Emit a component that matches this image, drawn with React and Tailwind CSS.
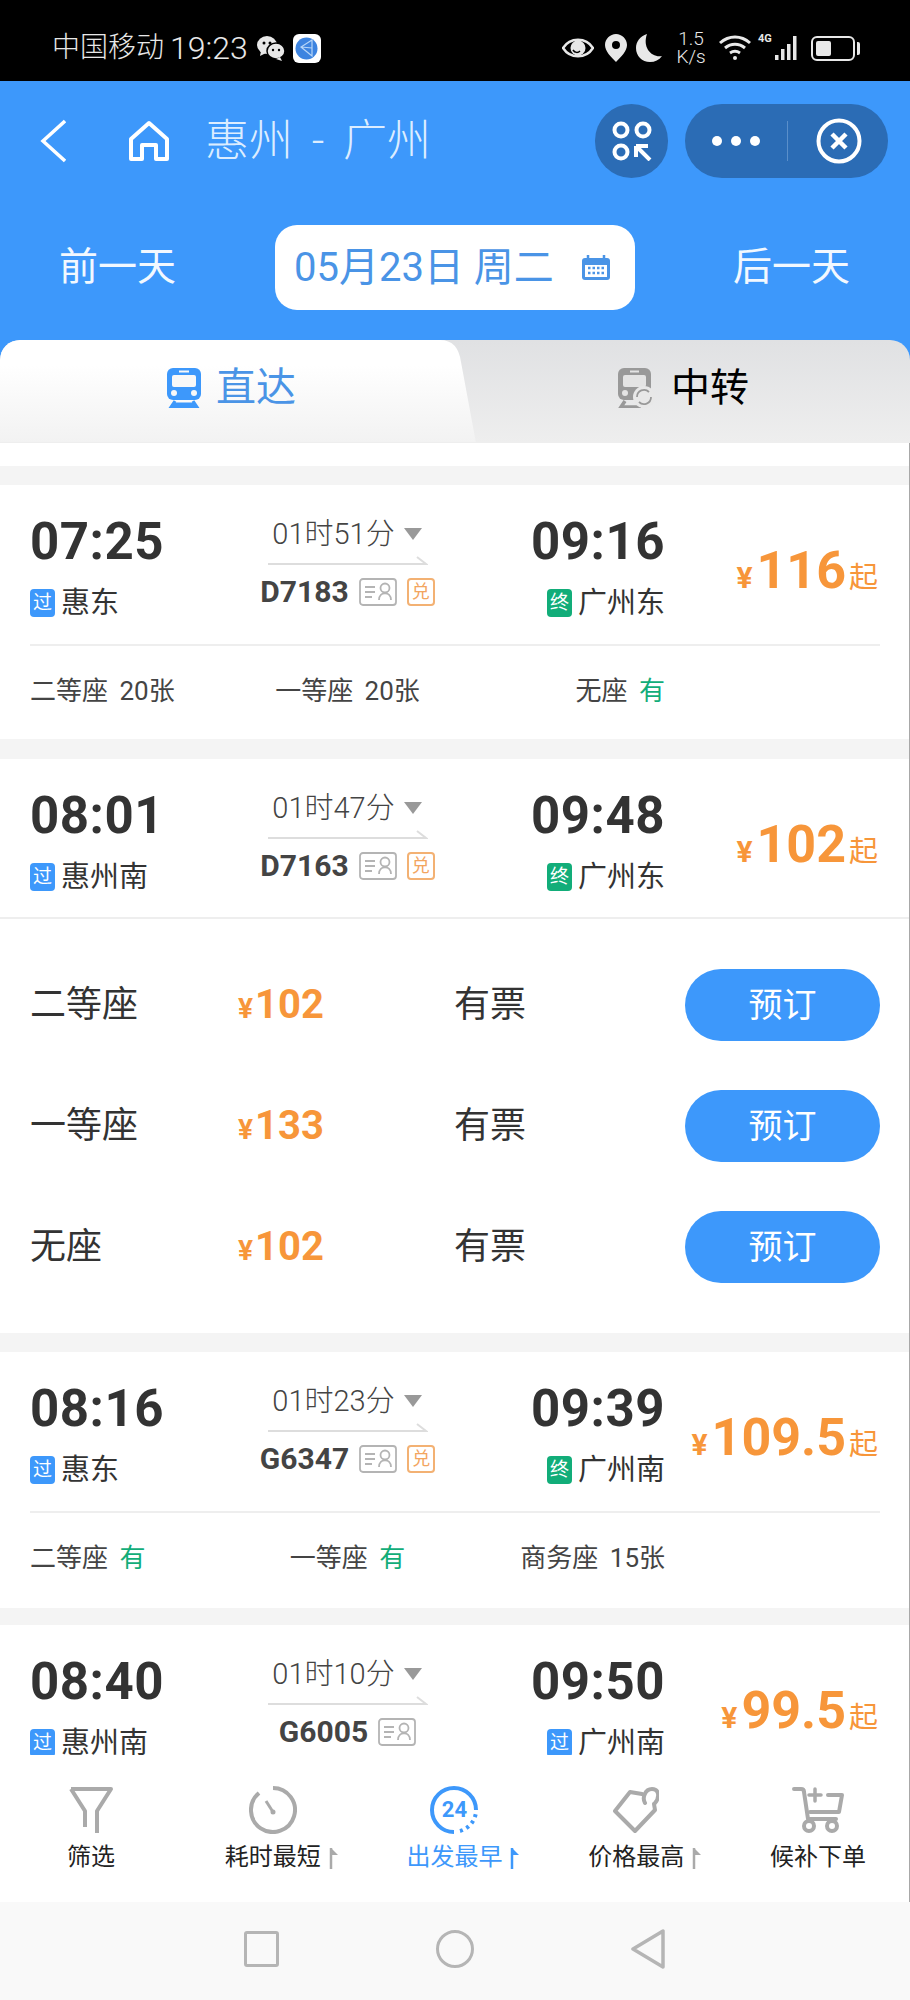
import React from "react";

function IdIcon() {
  return (
    <svg width="38" height="28" viewBox="0 0 38 28" fill="none" stroke="#b4b4b4" strokeWidth="1.8">
      <rect x="1" y="1" width="36" height="26" rx="3" />
      <path d="M6 9h10M6 14h10M6 19h7" />
      <circle cx="26" cy="10" r="4.5" />
      <path d="M20 22c0-9 12-9 12 0" />
    </svg>
  );
}

function Tag({ kind }) {
  const bg = kind === "终" ? "bg-[#12ad79]" : "bg-[#3d98fb]";
  return (
    <span className={`${bg} w-[25px] h-[28px] rounded-[4px] text-white text-[19px] leading-[28px] text-center shrink-0`}>
      {kind}
    </span>
  );
}

function Header({ from, fromTag, dep, dur, no, exch, arr, to, toTag, price }) {
  return (
    <div className="flex h-[135px] pl-[30px] pr-[31px] pt-[27px] items-start">
      <div className="w-[200px]">
        <div className="text-[51px] leading-[60px] font-bold text-[#333333] tracking-[0.5px]">{dep}</div>
        <div className="flex items-center gap-[6px] mt-[14px] h-[34px]">
          <Tag kind={fromTag} />
          <span className="text-[29px] leading-[34px] text-[#333333]">{from}</span>
        </div>
      </div>
      <div className="w-[235px] flex flex-col items-center">
        <div className="flex items-center gap-[9px] h-[40px] mt-[2px] -ml-[1px]">
          <span className="text-[29px] leading-[40px] font-light text-[#444444] whitespace-nowrap">{dur}</span>
          <span className="w-0 h-0 border-x-[9px] border-x-transparent border-t-[12px] border-t-[#999999]" />
        </div>
        <svg width="160" height="10" viewBox="0 0 160 10" fill="none" stroke="#dddddd" strokeWidth="2" className="mt-[1px]">
          <path d="M0 9h158l-9-7" />
        </svg>
        <div className="flex items-center gap-[10px] mt-[9px] h-[36px]">
          <span className="text-[30px] leading-[36px] font-bold text-[#444444]">{no}</span>
          <IdIcon />
          {exch && (
            <span className="w-[28px] h-[28px] rounded-[4px] border-2 border-[#f3b173] text-[#f3a55f] text-[18px] leading-[24px] text-center">
              兑
            </span>
          )}
        </div>
      </div>
      <div className="w-[200px] flex flex-col items-end">
        <div className="text-[51px] leading-[60px] font-bold text-[#333333] tracking-[0.5px]">{arr}</div>
        <div className="flex items-center gap-[6px] mt-[14px] h-[34px]">
          <Tag kind={toTag} />
          <span className="text-[29px] leading-[34px] text-[#333333]">{to}</span>
        </div>
      </div>
      <div className="flex-1 flex items-baseline justify-end mt-[29px] text-[#f7963a] whitespace-nowrap">
        <span className="text-[30px] font-bold mr-[4px]">¥</span>
        <span className="text-[52px] leading-[60px] font-bold">{price}</span>
        <span className="text-[29px] ml-[3px]">起</span>
      </div>
    </div>
  );
}

function Seats({ items }) {
  return (
    <div className="ml-[30px] mr-[29px] border-t-2 border-[#eeeeee] h-[92px] flex items-center">
      <div className="grid grid-cols-3 w-[635px]">
        {items.map(([name, v], i) => (
          <div
            key={name}
            className={`text-[26px] text-[#444444] whitespace-nowrap [word-spacing:5px] ${i === 0 ? "justify-self-start" : i === 1 ? "justify-self-center" : "justify-self-end"}`}
          >
            {name} {v === "有" ? <span className="text-[#12ad79]">有</span> : v}
          </div>
        ))}
      </div>
    </div>
  );
}

function Book({ name, price }) {
  return (
    <div className="flex items-center h-[72px] pl-[30px] pr-[29px]">
      <span className="w-[208px] text-[36px] text-[#333333]">{name}</span>
      <span className="w-[216px] text-[#f7963a] font-bold">
        <span className="text-[28px] mr-[2px]">¥</span>
        <span className="text-[40px]">{price}</span>
      </span>
      <span className="w-[231px] text-[36px] text-[#333333]">有票</span>
      <button className="w-[195px] h-[72px] rounded-[36px] bg-[#3d98fb] text-white text-[34px]">预订</button>
    </div>
  );
}

function BarItem({ icon, label, arrow, active }) {
  const tone = active ? "text-[#3d98fb]" : "text-[#222222]";
  return (
    <div className="w-[182px] flex flex-col items-center">
      <div className="h-[50px] flex items-center justify-center">{icon}</div>
      <div className={`relative mt-[4px] text-[24px] leading-[36px] ${tone}`}>
        <span>{label}</span>
        {arrow && (
          <svg width="10" height="24" viewBox="0 0 10 24" className="absolute left-full top-[7px] ml-[8px]">
            <path d="M2 2v21" stroke={active ? "#3d98fb" : "#aaaaaa"} strokeWidth="2.5" />
            <path d="M3 3l6 6H3z" fill={active ? "#3d98fb" : "#aaaaaa"} />
          </svg>
        )}
      </div>
    </div>
  );
}

export default function App() {
  return (
    <div className="w-[910px] h-[2000px] flex flex-col bg-white overflow-hidden font-['Roboto','Noto_Sans_CJK_SC',sans-serif]">
      {/* status bar */}
      <div className="h-[81px] bg-black flex items-center pt-[15px] pl-[52px] pr-[50px] text-[#e8e8e8] shrink-0">
        <span className="text-[28px] leading-none font-light whitespace-nowrap">中国移动</span>
        <span className="text-[32px] leading-none font-light ml-[6px]">19:23</span>
        <svg width="28" height="26" viewBox="0 0 28 26" className="ml-[9px]" fill="#e8e8e8">
          <ellipse cx="10" cy="10" rx="10" ry="9" />
          <path d="M4 16l-1 5 6-3z" />
          <ellipse cx="19" cy="16" rx="9" ry="8" stroke="#000" strokeWidth="1.5" />
          <path d="M23 22l2 4-6-2z" />
          <circle cx="7" cy="8" r="1.5" fill="#000" />
          <circle cx="13" cy="8" r="1.5" fill="#000" />
          <circle cx="16" cy="15" r="1.2" fill="#000" />
          <circle cx="22" cy="15" r="1.2" fill="#000" />
        </svg>
        <span className="ml-[8px] w-[28px] h-[29px] rounded-[6px] bg-white flex items-center justify-center">
          <svg width="23" height="23" viewBox="0 0 23 23">
            <circle cx="11.5" cy="11.5" r="11" fill="#3d84e0" />
            <path d="M17 3L6 10l11 9zM6 10l11 1" stroke="#b7d6f7" strokeWidth="1.2" fill="none" />
          </svg>
        </span>
        <div className="flex-1" />
        <svg width="32" height="24" viewBox="0 0 32 24" fill="none">
          <path d="M1 12C8 1 24 1 31 12 24 23 8 23 1 12z" stroke="#e8e8e8" strokeWidth="2.5" />
          <circle cx="16" cy="12" r="7.5" fill="#e8e8e8" />
          <path d="M11 14c2 3 5 3 7 1" stroke="#000" strokeWidth="1.5" />
        </svg>
        <svg width="22" height="28" viewBox="0 0 22 28" className="ml-[11px]">
          <path fillRule="evenodd" d="M11 0c6 0 11 5 11 11 0 6-6 12-11 17C6 23 0 17 0 11 0 5 5 0 11 0zm0 7a4 4 0 100 8 4 4 0 000-8z" fill="#e8e8e8" />
        </svg>
        <svg width="26" height="28" viewBox="0 0 26 28" className="ml-[9px]">
          <path d="M11 0C4 2 0 8 0 14c0 8 6 14 14 14 5 0 9-2 12-6C16 24 6 14 11 0z" fill="#e8e8e8" />
        </svg>
        <div className="ml-[14px] w-[30px] flex flex-col items-center text-[#e8e8e8]">
          <span className="text-[19px] leading-[18px] font-light">1.5</span>
          <span className="text-[19px] leading-[18px] font-light">K/s</span>
        </div>
        <svg width="32" height="26" viewBox="0 0 32 26" fill="none" stroke="#e8e8e8" strokeWidth="3" className="ml-[13px]">
          <path d="M1 8c9-8 21-8 30 0M6 13c6-5 14-5 20 0M11 18c3-2 7-2 10 0" />
          <circle cx="16" cy="23" r="2" fill="#e8e8e8" stroke="none" />
        </svg>
        <div className="relative ml-[7px] w-[43px] h-[26px]">
          <span className="absolute left-0 -top-[2px] text-[11px] leading-none font-bold">4G</span>
          <svg width="43" height="26" viewBox="0 0 43 26" fill="#e8e8e8">
            <rect x="17" y="20" width="3.5" height="5" />
            <rect x="23" y="14" width="3.5" height="11" />
            <rect x="29" y="9" width="3.5" height="16" />
            <rect x="35" y="1" width="3.5" height="24" />
          </svg>
        </div>
        <div className="ml-[10px] flex items-center">
          <div className="w-[44px] h-[25px] rounded-[6px] border-2 border-[#e8e8e8] p-[3px]">
            <div className="w-[15px] h-full bg-[#e8e8e8] rounded-[2px]" />
          </div>
          <div className="w-[3px] h-[13px] bg-[#e8e8e8] ml-[2px] rounded-r-[2px]" />
        </div>
      </div>

      {/* blue header */}
      <div className="h-[259px] bg-[#3d98fb] shrink-0 flex flex-col">
        <div className="h-[74px] mt-[23px] flex items-center pl-[40px] pr-[22px]">
          <svg width="26" height="44" viewBox="0 0 26 44" fill="none" stroke="#ffffff" strokeWidth="3.5">
            <path d="M25 2L3 22l22 20" />
          </svg>
          <svg width="42" height="42" viewBox="0 0 42 42" fill="none" stroke="#ffffff" strokeWidth="4" strokeLinejoin="round" className="ml-[62px]">
            <path d="M21 3L3 19v20h11V25h14v14h11V19z" />
          </svg>
          <span className="ml-[35px] text-[44px] leading-none font-light text-[#dcedff] whitespace-nowrap [word-spacing:8px]">惠州 - 广州</span>
          <div className="flex-1" />
          <div className="w-[73px] h-[74px] rounded-full bg-[#2b6cb5] flex items-center justify-center">
            <svg width="40" height="40" viewBox="0 0 40 40" fill="none" stroke="#ffffff" strokeWidth="4">
              <circle cx="9" cy="9" r="6.5" />
              <circle cx="31" cy="9" r="6.5" />
              <circle cx="9" cy="31" r="6.5" />
              <path d="M24 25h12M24 25v11M25 26l13 13" />
            </svg>
          </div>
          <div className="ml-[17px] w-[203px] h-[74px] rounded-[37px] bg-[#2b6cb5] flex items-center">
            <div className="w-[102px] flex justify-center gap-[9px]">
              <span className="w-[10px] h-[10px] rounded-full bg-white" />
              <span className="w-[10px] h-[10px] rounded-full bg-white" />
              <span className="w-[10px] h-[10px] rounded-full bg-white" />
            </div>
            <div className="w-px h-[40px] bg-[#5a8fca]" />
            <svg width="46" height="46" viewBox="0 0 46 46" fill="none" stroke="#ffffff" className="ml-[28px]">
              <circle cx="23" cy="23" r="20.5" strokeWidth="4" />
              <path d="M16 16l14 14M30 16L16 30" strokeWidth="4.5" />
            </svg>
          </div>
        </div>
        <div className="flex items-center mt-[47px] pl-[59px]">
          <span className="w-[216px] text-[39px] leading-none text-[#f2f8ff]">前一天</span>
          <div className="w-[360px] h-[85px] rounded-[22px] bg-white flex items-center pl-[19px] text-[#4a94e6]">
            <span className="text-[40px] leading-none whitespace-nowrap">05月23日 周二</span>
            <svg width="30" height="26" viewBox="0 0 30 26" className="ml-[27px]">
              <rect x="1" y="3" width="28" height="22" rx="3" fill="#4a94e6" />
              <rect x="4" y="10" width="22" height="12" fill="#ffffff" />
              <path d="M7 0v5M23 0v5" stroke="#4a94e6" strokeWidth="2.5" />
              <path d="M7 13h16M7 18h16" stroke="#4a94e6" strokeWidth="2.5" strokeDasharray="2.5 2" />
            </svg>
          </div>
          <span className="ml-[98px] text-[39px] leading-none text-[#f2f8ff] whitespace-nowrap">后一天</span>
        </div>
      </div>

      {/* tabs */}
      <div className="h-[103px] shrink-0 bg-[#3d98fb]">
        <div className="relative h-full rounded-t-[20px] overflow-hidden bg-gradient-to-b from-[#e0e1e3] to-[#eeeeee] border-b border-[#eeeeee]">
          <div className="h-full w-full flex items-center justify-end pr-[161px] pb-[6px]">
            <svg width="38" height="40" viewBox="0 0 38 40">
              <path d="M7 0h21a6 6 0 016 6v20a6 6 0 01-6 6H7a6 6 0 01-6-6V6a6 6 0 016-6z" fill="#999999" />
              <rect x="6" y="7" width="23" height="12" rx="2" fill="#e4e4e4" />
              <path d="M13 3.5h9" stroke="#e4e4e4" strokeWidth="2" />
              <circle cx="8" cy="25" r="3" fill="#e4e4e4" />
              <path d="M8 33l-4 6h20" stroke="#999999" strokeWidth="3.5" fill="none" />
              <circle cx="27" cy="29" r="11" fill="#e8e8e8" />
              <path d="M20 29a7 7 0 0112-5M34 29a7 7 0 01-12 5" stroke="#999999" strokeWidth="1.8" fill="none" />
            </svg>
            <span className="ml-[16px] text-[39px] leading-none text-black whitespace-nowrap">中转</span>
          </div>
          <div className="absolute left-0 top-0 h-full w-[476px] bg-gradient-to-b from-white from-25% to-[#f2f2f2] [clip-path:path('M0_20Q0_0_20_0L440_0Q458_0_461_22L476_103L0_103Z')] flex items-center pl-[166px] pb-[6px]">
            <svg width="36" height="40" viewBox="0 0 36 40">
              <path d="M7 0h22a6 6 0 016 6v20a6 6 0 01-6 6H7a6 6 0 01-6-6V6a6 6 0 016-6z" fill="#3d98fb" />
              <rect x="6" y="7" width="24" height="12" rx="2" fill="#f8f8f8" />
              <path d="M13 3.5h10" stroke="#f8f8f8" strokeWidth="2" />
              <circle cx="8" cy="25" r="3" fill="#f8f8f8" />
              <circle cx="28" cy="25" r="3" fill="#f8f8f8" />
              <path d="M9 33l-4 6h26l-4-6M8 36h20" stroke="#3d98fb" strokeWidth="3" fill="none" />
            </svg>
            <span className="ml-[14px] text-[40px] leading-none text-[#4a94e6] whitespace-nowrap">直达</span>
          </div>
        </div>
      </div>

      {/* list */}
      <div className="flex-1 min-h-0 overflow-hidden bg-white border-r border-[#a8a8a8]">
        <div className="h-[23px] bg-white" />
        <div className="h-[19px] bg-[#f4f4f4]" />
        <div className="h-[254px] bg-white">
          <Header dep="07:25" fromTag="过" from="惠东" dur="01时51分" no="D7183" exch arr="09:16" toTag="终" to="广州东" price="116" />
          <div className="h-[24px]" />
          <Seats items={[["二等座", "20张"], ["一等座", "20张"], ["无座", "有"]]} />
        </div>
        <div className="h-[20px] bg-[#f4f4f4]" />
        <div className="h-[574px] bg-white">
          <Header dep="08:01" fromTag="过" from="惠州南" dur="01时47分" no="D7163" exch arr="09:48" toTag="终" to="广州东" price="102" />
          <div className="border-t-2 border-[#eeeeee] mt-[23px] pt-[50px] flex flex-col gap-[49px]">
            <Book name="二等座" price="102" />
            <Book name="一等座" price="133" />
            <Book name="无座" price="102" />
          </div>
        </div>
        <div className="h-[19px] bg-[#f4f4f4]" />
        <div className="h-[256px] bg-white">
          <Header dep="08:16" fromTag="过" from="惠东" dur="01时23分" no="G6347" exch arr="09:39" toTag="终" to="广州南" price="109.5" />
          <div className="h-[24px]" />
          <Seats items={[["二等座", "有"], ["一等座", "有"], ["商务座", "15张"]]} />
        </div>
        <div className="h-[17px] bg-[#f4f4f4]" />
        <div className="bg-white">
          <Header dep="08:40" fromTag="过" from="惠州南" dur="01时10分" no="G6005" arr="09:50" toTag="过" to="广州南" price="99.5" />
        </div>
      </div>

      {/* bottom bar */}
      <div className="h-[147px] shrink-0 bg-white flex pt-[30px] border-r border-[#a8a8a8]">
        <BarItem
          label="筛选"
          icon={
            <svg width="44" height="46" viewBox="0 0 44 46" fill="none" stroke="#aaaaaa" strokeWidth="4" strokeLinejoin="round">
              <path d="M2 2h40L28 24v22M16 40V24L2 2" />
            </svg>
          }
        />
        <BarItem
          label="耗时最短"
          arrow
          icon={
            <svg width="48" height="48" viewBox="0 0 48 48" fill="none" stroke="#aaaaaa" strokeWidth="4">
              <path d="M24 2a22 22 0 11-14 5" />
              <path d="M17 15l7 11" strokeWidth="3" />
              <circle cx="24" cy="26" r="2.5" fill="#aaaaaa" stroke="none" />
            </svg>
          }
        />
        <BarItem
          label="出发最早"
          arrow
          active
          icon={
            <div className="relative w-[48px] h-[48px] flex items-center justify-center">
              <svg width="48" height="48" viewBox="0 0 48 48" fill="none" stroke="#3d98fb" strokeWidth="4" className="absolute inset-0">
                <path d="M46 24A22 22 0 1024 46" />
                <path d="M30 45A22 22 0 0046 26" strokeDasharray="3 4" />
              </svg>
              <span className="text-[22px] font-bold leading-none text-[#3d98fb]">24</span>
            </div>
          }
        />
        <BarItem
          label="价格最高"
          arrow
          icon={
            <svg width="46" height="48" viewBox="0 0 46 48" fill="none" stroke="#aaaaaa" strokeWidth="4" strokeLinejoin="round" strokeLinecap="round">
              <path d="M29 8L17 6 2 25l20 20 20-21-1-6" />
              <path d="M32 17c-3-5 0-14 7-14s8 8 3 14" />
            </svg>
          }
        />
        <BarItem
          label="候补下单"
          icon={
            <svg width="52" height="46" viewBox="0 0 52 46" fill="none" stroke="#aaaaaa" strokeWidth="4" strokeLinecap="round" strokeLinejoin="round">
              <path d="M2 2h7c2 0 3 1 3 3l4 27h28" />
              <path d="M36 8h14l-3 17H18" />
              <path d="M23 2v12M17 8h12" strokeWidth="3.5" />
              <circle cx="17" cy="39" r="5" />
              <circle cx="40" cy="39" r="5" />
            </svg>
          }
        />
      </div>

      {/* nav bar */}
      <div className="h-[98px] shrink-0 bg-[#f9f9f9] flex items-center pb-[4px]">
        <div className="ml-[244px] w-[35px] h-[36px] border-[3.5px] border-[#b5b5b5] rounded-[3px]" />
        <div className="ml-[157px] w-[38px] h-[38px] border-[3.5px] border-[#b5b5b5] rounded-full" />
        <svg width="34" height="40" viewBox="0 0 34 40" fill="none" stroke="#b5b5b5" strokeWidth="3.5" strokeLinejoin="round" className="ml-[157px]">
          <path d="M32 2v36L2 20z" />
        </svg>
      </div>
    </div>
  );
}
